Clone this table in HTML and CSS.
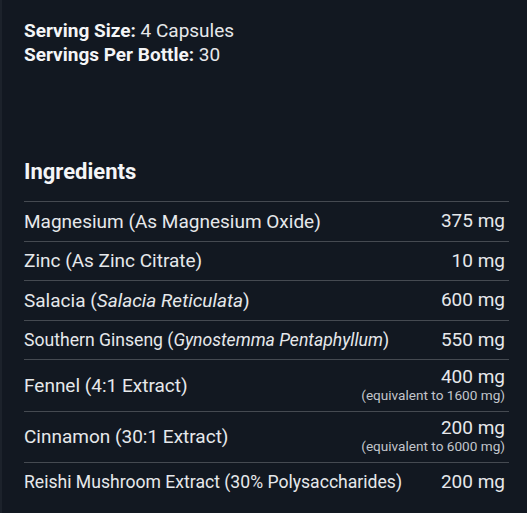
FILE: index.html
```html
<!DOCTYPE html>
<html>
<head>
<meta charset="utf-8">
<link rel="stylesheet" href="styles.css">
</head>
<body>
<div class="panel">
  <div class="serving">
    <p><b>Serving Size:</b> 4 Capsules</p>
    <p><b>Servings Per Bottle:</b> 30</p>
  </div>
  <h2 class="title">Ingredients</h2>
  <div class="table">
    <div class="row"><span class="name">Magnesium (As Magnesium Oxide)</span><span class="amt">375 mg</span></div>
    <div class="row"><span class="name">Zinc (As Zinc Citrate)</span><span class="amt">10 mg</span></div>
    <div class="row"><span class="name">Salacia (<i>Salacia Reticulata</i>)</span><span class="amt">600 mg</span></div>
    <div class="row"><span class="name small">Southern Ginseng (<i>Gynostemma Pentaphyllum</i>)</span><span class="amt">550 mg</span></div>
    <div class="row tall"><span class="name">Fennel (4:1 Extract)</span><span class="amt">400 mg<small>(equivalent to 1600 mg)</small></span></div>
    <div class="row tall"><span class="name">Cinnamon (30:1 Extract)</span><span class="amt">200 mg<small>(equivalent to 6000 mg)</small></span></div>
    <div class="row"><span class="name small">Reishi Mushroom Extract (30% Polysaccharides)</span><span class="amt">200 mg</span></div>
  </div>
</div>
</body>
</html>
```
FILE: styles.css
```css
html, body {
  margin: 0;
  padding: 0;
  background: #121821;
}
body {
  font-family: Roboto, "Liberation Sans", sans-serif;
  color: #e6e8eb;
  border-left: 2px solid #1c222b;
  min-height: 513px;
  box-sizing: border-box;
}
.panel {
  padding: 19px 18px 0 22px;
}
.serving p {
  margin: 0;
  font-size: 19px;
  line-height: 24px;
}
.serving b {
  font-weight: 700;
  color: #f4f5f7;
}
.title {
  margin: 91.5px 0 0 0;
  font-size: 22px;
  line-height: 26px;
  font-weight: 700;
  color: #f4f5f7;
}
.table {
  margin-top: 16.5px;
}
.row {
  display: flex;
  justify-content: space-between;
  align-items: center;
  border-top: 1px solid #454a51;
  height: 39.5px;
  padding: 0 4px 0 0;
  box-sizing: border-box;
  font-size: 19px;
}
.row.tall { height: 51.5px; }
.name { white-space: nowrap; }
.name.small { font-size: 17.6px; }
.amt {
  display: flex;
  flex-direction: column;
  align-items: flex-end;
  line-height: 20px;
  white-space: nowrap;
}
.amt small {
  font-size: 13.6px;
  line-height: 17px;
  color: #c2c6cc;
}
```
